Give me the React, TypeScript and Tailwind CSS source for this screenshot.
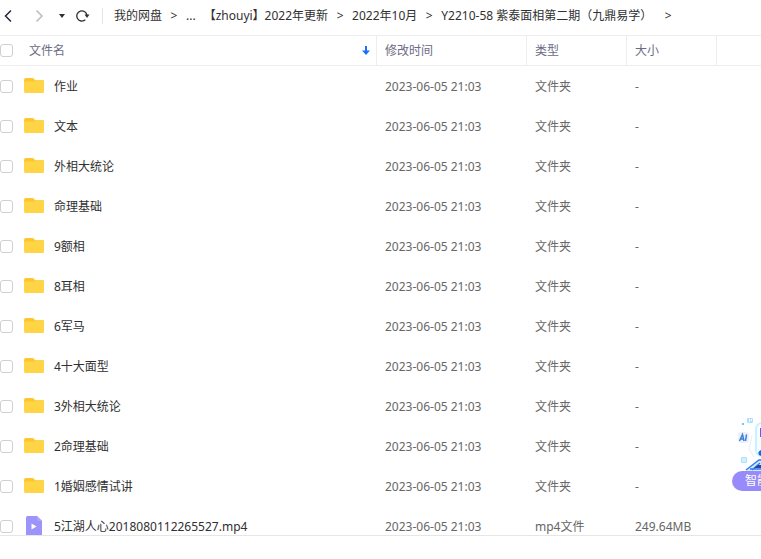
import type { ReactNode } from "react";

type FileEntry = {
  name: string;
  modified: string;
  type: string;
  size: string;
  kind: "folder" | "video";
};

const folderNames = [
  "作业",
  "文本",
  "外相大统论",
  "命理基础",
  "9额相",
  "8耳相",
  "6军马",
  "4十大面型",
  "3外相大统论",
  "2命理基础",
  "1婚姻感情试讲",
];

const files: FileEntry[] = [
  ...folderNames.map((name) => ({
    name,
    modified: "2023-06-05 21:03",
    type: "文件夹",
    size: "-",
    kind: "folder" as const,
  })),
  {
    name: "5江湖人心2018080112265527.mp4",
    modified: "2023-06-05 21:03",
    type: "mp4文件",
    size: "249.64MB",
    kind: "video",
  },
];

function FolderIcon() {
  return (
    <svg width="20" height="16" viewBox="0 0 20 16" aria-hidden="true">
      <path d="M0 2Q0 0 2 0H8.500Q9.500 0 10 .7L11 2H18.500Q20 2 20 3.500V8H0Z" fill="#ffc52e" />
      <path d="M0 4.500Q0 3.500 1 3.500H9.500Q10.500 3.500 11 2.700L11.300 2H18.500Q20 2 20 3.500V13.500Q20 15 18.500 15H1.500Q0 15 0 13.500Z" fill="#ffd547" />
    </svg>
  );
}

function VideoIcon() {
  return (
    <svg width="20" height="20" viewBox="0 0 20 20" aria-hidden="true">
      <path d="M2 1.500Q2 0 3.500 0H13L18 5V20H2Z" fill="#9c93fb" />
      <path d="M13 0L18 5H15Q13 5 13 3Z" fill="#aaa4fd" />
      <path d="M7.500 7.500L12.500 10.500L7.500 13.500Z" fill="#fff" />
    </svg>
  );
}

function Checkbox({ label }: { label: string }) {
  return (
    <input
      type="checkbox"
      aria-label={label}
      className="block size-[13px] appearance-none rounded-[3px] border border-[#d0d0d3] bg-white checked:bg-[#06a7ff]"
    />
  );
}

function NavButton({ label, children }: { label: string; children: ReactNode }) {
  return (
    <button type="button" aria-label={label} className="flex h-6 items-center">
      {children}
    </button>
  );
}

function Toolbar() {
  return (
    <header className="flex h-[35px] shrink-0 items-center pb-1 text-[#303030]">
      <div className="flex items-center pl-1">
        <NavButton label="后退">
          <svg width="9" height="14" viewBox="0 0 9 14" fill="none">
            <path d="M7 1.500L1.500 7L7 12.500" stroke="#26263a" strokeWidth="1.500" />
          </svg>
        </NavButton>
        <div className="pl-[22px]">
          <NavButton label="前进">
            <svg width="9" height="14" viewBox="0 0 9 14" fill="none">
              <path d="M1.500 1.500L7 7L1.500 12.500" stroke="#b9bdb9" strokeWidth="1.500" />
            </svg>
          </NavButton>
        </div>
        <div className="pl-[15px]">
          <NavButton label="历史记录">
            <svg width="6" height="14" viewBox="0 0 6 14">
              <path d="M0 5H6L3 9Z" fill="#303030" />
            </svg>
          </NavButton>
        </div>
        <div className="pl-[11px]">
          <NavButton label="刷新">
            <svg width="14" height="14" viewBox="0 0 14 14" fill="none">
              <path d="M9.300 10.800A5.100 5.100 0 1 1 11 6.500" stroke="#303030" strokeWidth="1.300" />
              <path d="M8.500 5.500H13.500L11 9Z" fill="#303030" />
            </svg>
          </NavButton>
        </div>
      </div>
      <span className="ml-3 h-4 w-px bg-[#e3e3e8]" />
      <nav aria-label="路径" className="flex items-center whitespace-nowrap pl-[11px]">
        <a href="#root">我的网盘</a>
        <span className="w-6 text-center">&gt;</span>
        <a href="#parent">...</a>
        <a href="#2022" className="pl-2">
          【zhouyi】2022年更新
        </a>
        <span className="w-6 text-center">&gt;</span>
        <a href="#october">2022年10月</a>
        <span className="w-6 text-center">&gt;</span>
        <a href="#course">Y2210-58 紫泰面相第二期（九鼎易学）</a>
        <span className="w-8 text-center">&gt;</span>
      </nav>
    </header>
  );
}

function FileTable() {
  return (
    <table className="w-full table-fixed border-separate border-spacing-0 text-left">
      <colgroup>
        <col className="w-6" />
        <col />
        <col className="w-[150px]" />
        <col className="w-[100px]" />
        <col className="w-[90px]" />
        <col className="w-11" />
      </colgroup>
      <thead className="text-[#6b6b85]">
        <tr className="h-[31px] *:border-y *:border-[#ededf0] *:p-0 *:font-normal">
          <th>
            <Checkbox label="全选" />
          </th>
          <th className="border-r">
            <div className="flex items-center justify-between pl-[5px] pr-1.5">
              文件名
              <button type="button" aria-label="排序">
                <svg width="8" height="10" viewBox="0 0 8 10">
                  <path d="M3 0H5V4.500H8L4 9L0 4.500H3Z" fill="#1f6fff" />
                </svg>
              </button>
            </div>
          </th>
          <th className="border-r">
            <span className="pl-2">修改时间</span>
          </th>
          <th className="border-r">
            <span className="pl-2">类型</span>
          </th>
          <th className="border-r">
            <span className="pl-2">大小</span>
          </th>
          <th />
        </tr>
      </thead>
      <tbody className="text-[#666]">
        {files.map((file) => (
          <tr key={file.name} className="h-10 hover:bg-[#f5f6fa]">
            <td className="p-0">
              <Checkbox label={file.name} />
            </td>
            <td className="p-0">
              <div className="flex items-center gap-2.5 text-[#303030]">
                {file.kind === "folder" ? <FolderIcon /> : <VideoIcon />}
                <span className="pt-0.5">{file.name}</span>
              </div>
            </td>
            <td className="pt-0.5 pl-2">{file.modified}</td>
            <td className="pt-0.5 pl-2">{file.type}</td>
            <td className="pt-0.5 pl-2">{file.size}</td>
            <td className="p-0" />
          </tr>
        ))}
      </tbody>
    </table>
  );
}

function AssistantButton() {
  return (
    <button
      type="button"
      className="absolute right-0 bottom-[68px] w-[29px] overflow-hidden text-left text-white"
    >
      <svg width="29" height="56" viewBox="0 0 29 56" fill="none" className="block">
        <rect x="15" y="3" width="6" height="5" rx="1" fill="#a9e2fa" />
        <path d="M17.500 4V7M19.500 4V6" stroke="#fff" />
        <rect x="10" y="8" width="2" height="2" fill="#6fcbf5" />
        <rect x="6" y="17" width="11" height="11" rx="3" fill="#eef1f7" />
        <path d="M7.500 26L10.500 19.500L12 26M8.500 24H12M14.500 19.500L13.500 26" stroke="#3b7fd8" strokeWidth="1.500" />
        <path d="M29 8Q24 9 24 15V34Q24 40 29 41" fill="#f4fdff" stroke="#c9f3fa" strokeWidth="2" />
        <path d="M20 20L17 34L22 42" stroke="#e8edf9" />
        <rect x="28" y="13" width="1" height="9" fill="#6b55f5" />
        <rect x="9" y="42" width="6" height="6" rx="1" fill="#a9e2fa" />
        <path d="M11 43V47M13 43V47" stroke="#fff" />
        <path d="M29 35Q25 37 27 40L29 41Z" fill="#1768e8" />
        <path d="M14 56L27 45H29V56Z" fill="#d4eafd" />
        <path d="M14 55L27 45H29M20 55L28 48M18 54H29" stroke="#2f7df0" strokeWidth="1.500" />
        <path d="M22 53L26 50H29V53Z" fill="#2446a8" />
      </svg>
      <span className="block h-5 w-12 rounded-l-full bg-[#978afb] pl-[13px] leading-5 whitespace-nowrap">
        智能
      </span>
    </button>
  );
}

export default function App() {
  return (
    <div className="relative flex h-screen flex-col overflow-hidden bg-white font-['Noto_Sans','Noto_Sans_CJK_SC',sans-serif] text-xs">
      <Toolbar />
      <main className="min-h-0 flex-1 overflow-hidden">
        <FileTable />
      </main>
      <footer className="h-6 shrink-0 border-t border-[#e6e6e6]" />
      <AssistantButton />
    </div>
  );
}
